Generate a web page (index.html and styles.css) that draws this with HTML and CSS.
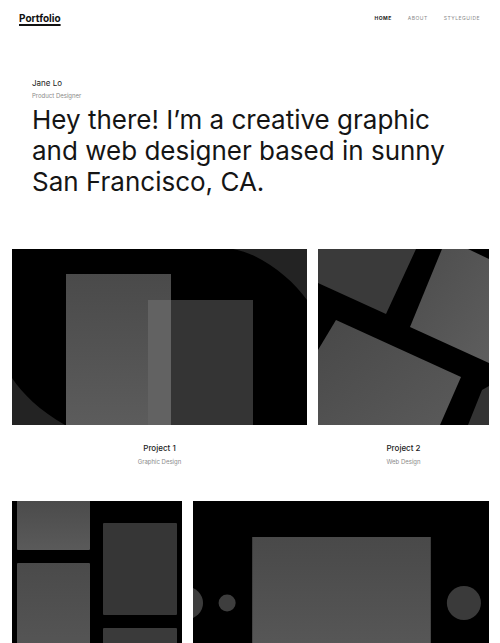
FILE: index.html
```html
<!DOCTYPE html>
<html lang="en">
<head>
<meta charset="utf-8">
<title>Portfolio</title>
<link rel="stylesheet" href="styles.css">
</head>
<body>
<header class="site-header">
  <a class="brand" href="#">Portfolio</a>
  <nav class="nav">
    <a class="nav-link active" href="#">HOME</a>
    <a class="nav-link" href="#">ABOUT</a>
    <a class="nav-link" href="#">STYLEGUIDE</a>
  </nav>
</header>

<section class="intro">
  <div class="name">Jane Lo</div>
  <div class="role">Product Designer</div>
  <h1 class="headline">Hey there! I’m a creative graphic and web designer based in sunny San Francisco, CA.</h1>
</section>

<main class="projects">
  <div class="row row-a">
    <a class="card" href="#">
      <svg class="thumb" viewBox="0 0 295 176" preserveAspectRatio="none">
        <defs>
          <linearGradient id="g1" x1="0" y1="0" x2="0" y2="1">
            <stop offset="0" stop-color="#4a4a4a"/>
            <stop offset="1" stop-color="#5c5c5c"/>
          </linearGradient>
        </defs>
        <rect width="295" height="176" fill="#000"/>
        <path d="M221 0 C250 5 280 30 295 51 L295 0 Z" fill="#232323"/>
        <path d="M0 129 C10 144 28 162 53 176 L0 176 Z" fill="#232323"/>
        <rect x="54" y="25" width="105" height="151" fill="url(#g1)"/>
        <rect x="136" y="51" width="105" height="125" fill="#343434"/>
        <rect x="136" y="51" width="23" height="125" fill="#626262"/>
      </svg>
      <div class="title">Project 1</div>
      <div class="kind">Graphic Design</div>
    </a>
    <a class="card" href="#">
      <svg class="thumb" viewBox="0 0 171 176" preserveAspectRatio="none">
        <defs>
          <linearGradient id="g2" x1="0" y1="0" x2="1" y2="1">
            <stop offset="0" stop-color="#4c4c4c"/>
            <stop offset="1" stop-color="#5e5e5e"/>
          </linearGradient>
          <linearGradient id="g3" x1="0" y1="0" x2="1" y2="1">
            <stop offset="0" stop-color="#484848"/>
            <stop offset="1" stop-color="#5a5a5a"/>
          </linearGradient>
        </defs>
        <rect width="171" height="176" fill="#000"/>
        <polygon points="0,0 98,0 68,65 0,34" fill="#3a3a3a"/>
        <polygon points="124,0 150,0 171,10 171,114 92,78" fill="url(#g2)"/>
        <polygon points="18,71 143,128 122,176 0,176 0,101" fill="url(#g3)"/>
        <polygon points="164,141 171,137 171,176 150,176" fill="#333"/>
      </svg>
      <div class="title">Project 2</div>
      <div class="kind">Web Design</div>
    </a>
  </div>
  <div class="row row-b">
    <a class="card" href="#">
      <svg class="thumb" viewBox="0 0 170 176" preserveAspectRatio="none">
        <defs>
          <linearGradient id="g4" x1="0" y1="0" x2="0" y2="1">
            <stop offset="0" stop-color="#4a4a4a"/>
            <stop offset="1" stop-color="#5a5a5a"/>
          </linearGradient>
        </defs>
        <rect width="170" height="176" fill="#000"/>
        <rect x="5" y="-4" width="73" height="53" rx="1" fill="url(#g4)"/>
        <rect x="91" y="22" width="74" height="92" rx="1" fill="#363636"/>
        <rect x="5" y="62" width="73" height="120" rx="1" fill="url(#g4)"/>
        <rect x="91" y="127" width="74" height="60" rx="1" fill="#3a3a3a"/>
      </svg>
      <div class="title">Project 3</div>
      <div class="kind">Branding</div>
    </a>
    <a class="card" href="#">
      <svg class="thumb" viewBox="0 0 295 176" preserveAspectRatio="none">
        <defs>
          <linearGradient id="g5" x1="0" y1="0" x2="0" y2="1">
            <stop offset="0" stop-color="#494949"/>
            <stop offset="1" stop-color="#5c5c5c"/>
          </linearGradient>
        </defs>
        <rect width="295" height="176" fill="#000"/>
        <rect x="59" y="36" width="178" height="150" fill="url(#g5)"/>
        <circle cx="-6" cy="102" r="16" fill="#3c3c3c"/>
        <circle cx="34" cy="102" r="8.5" fill="#3e3e3e"/>
        <circle cx="270" cy="102" r="17" fill="#3a3a3a"/>
      </svg>
      <div class="title">Project 4</div>
      <div class="kind">Web Design</div>
    </a>
  </div>
</main>
</body>
</html>
```

FILE: styles.css
```css
* { box-sizing: border-box; }

html, body {
  margin: 0;
  padding: 0;
  background: #fff;
}

body {
  font-family: "Inter", "Open Sans", "DejaVu Sans", sans-serif;
  color: #111;
}

a { text-decoration: none; color: inherit; }

.site-header {
  display: flex;
  justify-content: space-between;
  align-items: center;
  padding: 10px 20px 0 19px;
  height: 26px;
}

.brand {
  font-size: 10px;
  font-weight: 700;
  color: #111;
  text-decoration: underline;
  text-decoration-thickness: 1.5px;
  text-underline-offset: 2px;
}

.nav {
  display: flex;
  gap: 16px;
}

.nav-link {
  font-size: 5px;
  letter-spacing: 0.5px;
  color: #8a8a8a;
}

.nav-link.active {
  color: #222;
  font-weight: 700;
}

.intro {
  padding: 52px 32px 0;
}

.name {
  font-size: 8px;
  line-height: 10px;
  color: #222;
}

.role {
  font-size: 6px;
  line-height: 8px;
  margin-top: 4px;
  color: #8a8a8a;
}

.headline {
  margin: 4px 0 0;
  font-size: 26px;
  line-height: 31px;
  font-weight: 400;
  color: #151515;
  max-width: 430px;
}

.projects {
  padding: 52px 11px 0 12px;
  display: flex;
  flex-direction: column;
  gap: 35px;
}

.row {
  display: grid;
  gap: 11px;
}

.row-a { grid-template-columns: 295fr 171fr; }
.row-b { grid-template-columns: 170fr 296fr; }

.card {
  display: flex;
  flex-direction: column;
  align-items: center;
}

.thumb {
  display: block;
  width: 100%;
  height: 176px;
}

.title {
  margin-top: 18px;
  font-size: 8px;
  line-height: 10px;
  font-weight: 500;
  color: #222;
}

.kind {
  margin-top: 5px;
  font-size: 6px;
  line-height: 8px;
  color: #8a8a8a;
}
```
